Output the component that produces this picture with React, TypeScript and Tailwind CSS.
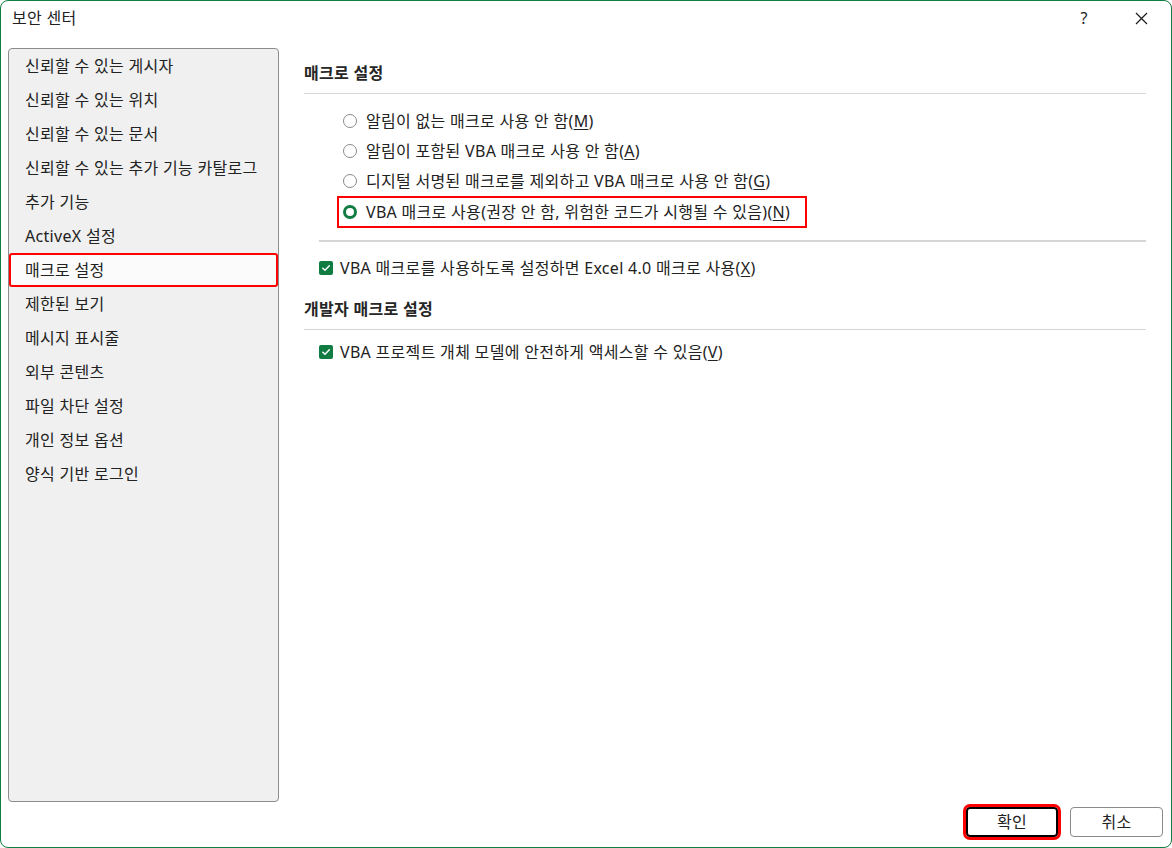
import React from 'react';

const font = { fontFamily: '"Noto Sans", "Noto Sans CJK KR", sans-serif' };

const navItems = [
  '신뢰할 수 있는 게시자',
  '신뢰할 수 있는 위치',
  '신뢰할 수 있는 문서',
  '신뢰할 수 있는 추가 기능 카탈로그',
  '추가 기능',
  'ActiveX 설정',
  '매크로 설정',
  '제한된 보기',
  '메시지 표시줄',
  '외부 콘텐츠',
  '파일 차단 설정',
  '개인 정보 옵션',
  '양식 기반 로그인',
];

const radios = [
  { label: '알림이 없는 매크로 사용 안 함', key: 'M' },
  { label: '알림이 포함된 VBA 매크로 사용 안 함', key: 'A' },
  { label: '디지털 서명된 매크로를 제외하고 VBA 매크로 사용 안 함', key: 'G' },
  { label: 'VBA 매크로 사용(권장 안 함, 위험한 코드가 시행될 수 있음)', key: 'N', checked: true },
];

const Label = ({ text, hotkey }: { text: string; hotkey: string }) => (
  <span className="whitespace-nowrap">
    {text}(<span className="underline underline-offset-2">{hotkey}</span>)
  </span>
);

const Radio = ({ checked }: { checked?: boolean }) =>
  checked ? (
    <span className="w-[14px] h-[14px] rounded-full border-[3px] border-[#107c41] bg-white shrink-0" />
  ) : (
    <span className="w-[14px] h-[14px] rounded-full border border-[#8a8a8a] bg-white shrink-0" />
  );

const Checkbox = () => (
  <span className="w-[14px] h-[14px] rounded-[2px] bg-[#107c41] flex items-center justify-center shrink-0">
    <svg width="10" height="10" viewBox="0 0 10 10" fill="none">
      <path d="M1.8 5.2 L4 7.3 L8.3 2.8" stroke="white" strokeWidth="1.5" strokeLinecap="round" strokeLinejoin="round" />
    </svg>
  </span>
);

export default function App() {
  return (
    <div
      className="w-[1172px] h-[848px] bg-white border border-[#107c41] rounded-lg flex flex-col overflow-hidden text-[16px] tracking-[0.3px] text-[#222222]"
      style={font}
    >
      {/* title bar */}
      <div className="h-[34px] flex items-center pl-[11px] shrink-0">
        <span className="flex-1">보안 센터</span>
        <span className="w-[20px] text-center mr-[37px]">?</span>
        <span className="w-[20px] flex justify-center mr-[20px]">
          <svg width="13" height="13" viewBox="0 0 13 13">
            <path d="M1 1 L12 12 M12 1 L1 12" stroke="#1b1b1b" strokeWidth="1.2" />
          </svg>
        </span>
      </div>

      <div className="flex mt-[13px] h-[754px] shrink-0">
        {/* sidebar */}
        <div className="ml-[7px] w-[271px] bg-[#f0f0f0] border border-[#8c8c8c] rounded-[4px] flex flex-col">
          {navItems.map((item) => {
            const active = item === '매크로 설정';
            return (
              <div
                key={item}
                className={
                  active
                    ? 'h-[34px] flex items-center pl-[14px] bg-[#fbfbfb] border-2 border-[#ff0000] rounded-[3px]'
                    : 'h-[34px] flex items-center pl-[16px]'
                }
              >
                {item}
              </div>
            );
          })}
        </div>

        {/* content */}
        <div className="flex-1 pl-[25px] pr-[25px] pt-[15px] flex flex-col">
          <div className="h-[20px] flex items-center font-semibold text-[#262626]">매크로 설정</div>
          <div className="mt-[10px] h-px bg-[#d6d6d6]" />

          <div className="mt-[12px] flex flex-col">
            {radios.map((r) =>
              r.checked ? (
                <div key={r.key} className="h-[30px] flex items-start">
                  <div className="ml-[33px] h-[32px] flex items-center gap-[9px] pl-[4px] pr-[15px] border-2 border-[#ff0000]">
                    <Radio checked />
                    <Label text={r.label} hotkey={r.key} />
                  </div>
                </div>
              ) : (
                <div key={r.key} className="h-[30px] flex items-center gap-[9px] pl-[39px]">
                  <Radio />
                  <Label text={r.label} hotkey={r.key} />
                </div>
              )
            )}
          </div>

          <div className="mt-[14px] ml-[15px] h-[2px] bg-[#d6d6d6]" />
          <div className="mt-[11px] h-[30px] flex items-center gap-[7px] pl-[15px]">
            <Checkbox />
            <Label text="VBA 매크로를 사용하도록 설정하면 Excel 4.0 매크로 사용" hotkey="X" />
          </div>

          <div className="mt-[16px] h-[20px] flex items-center font-semibold text-[#262626]">개발자 매크로 설정</div>
          <div className="mt-[10px] h-px bg-[#d6d6d6]" />
          <div className="mt-[7px] h-[30px] flex items-center gap-[7px] pl-[15px]">
            <Checkbox />
            <Label text="VBA 프로젝트 개체 모델에 안전하게 액세스할 수 있음" hotkey="V" />
          </div>
        </div>
      </div>

      {/* footer */}
      <div className="flex-1 flex justify-end items-start pt-[5px] pr-[8px] gap-[12px]">
        <button className="w-[92px] h-[30px] border-2 border-black rounded-[4px] bg-white outline-[3px] outline-[#ff0000] outline-offset-0 flex items-center justify-center">
          확인
        </button>
        <button className="w-[93px] h-[30px] border border-[#8a8a8a] rounded-[4px] bg-white flex items-center justify-center">
          취소
        </button>
      </div>
    </div>
  );
}
